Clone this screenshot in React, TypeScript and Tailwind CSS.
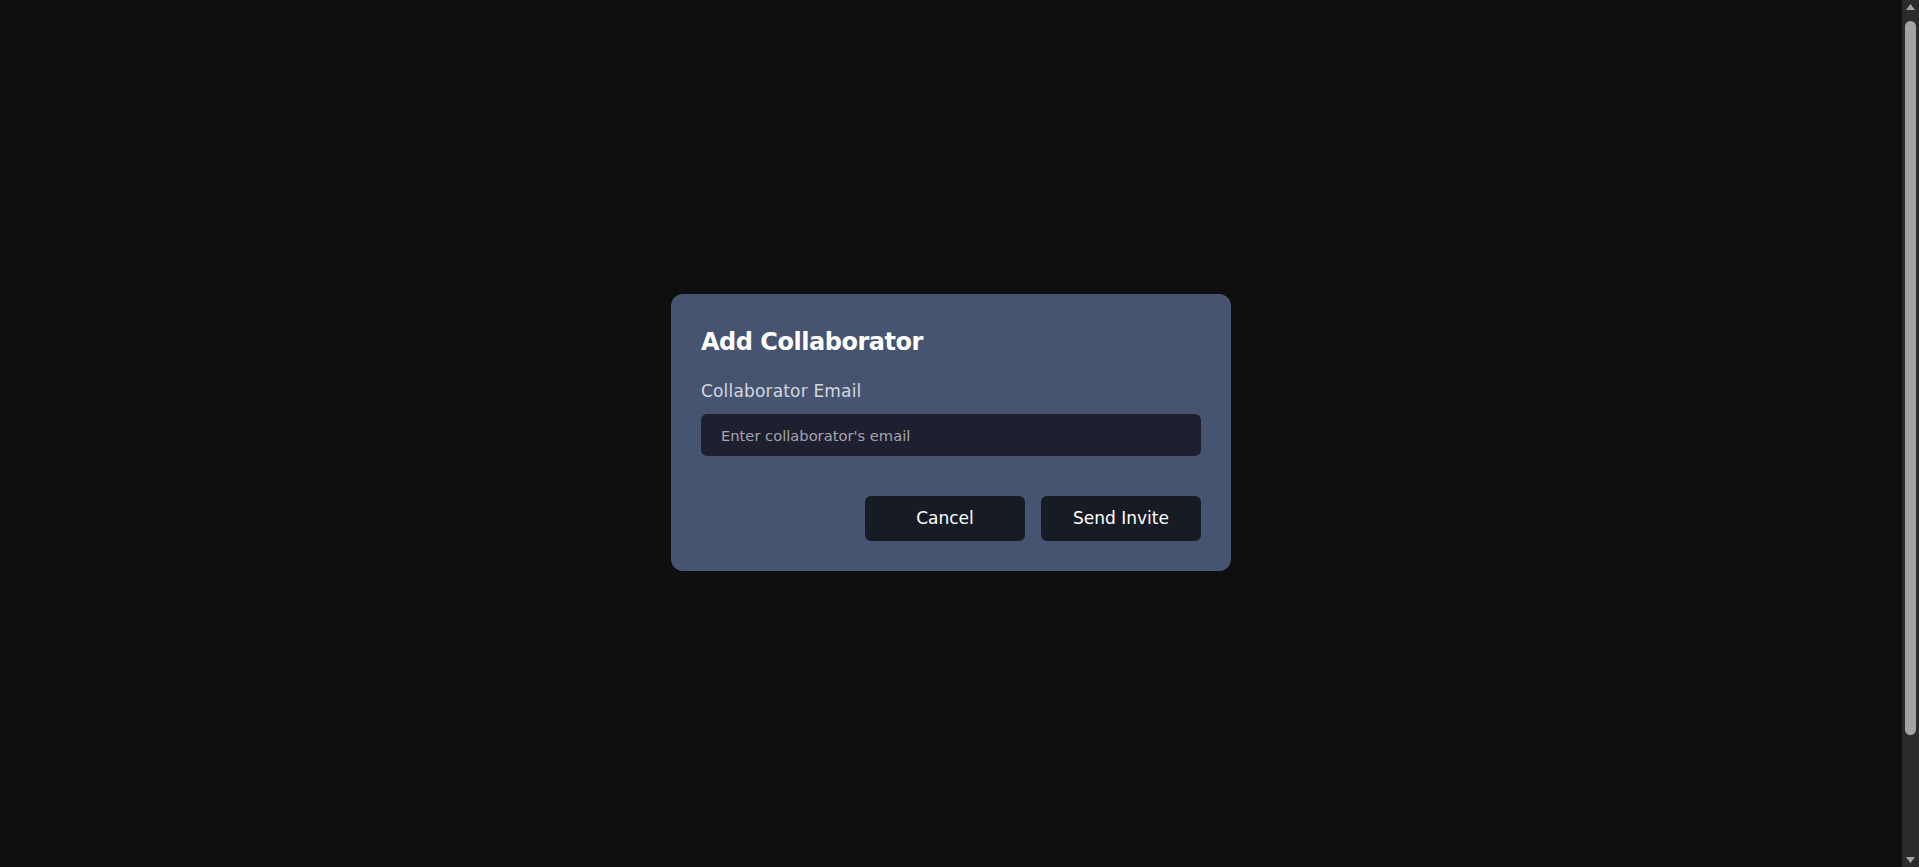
export default function App() {
  return (
    <div
      className="flex h-[867px] w-full overflow-hidden bg-[#0f0f11]"
      style={{ fontFamily: '"DejaVu Sans", "Noto Sans", sans-serif' }}
    >
      <main className="flex flex-1 items-center justify-center pb-[2px]">
        <div className="w-[560px] rounded-xl bg-[#475470] px-[30px] pt-[32px] pb-[30px]">
          <h2 className="text-2xl leading-8 font-bold tracking-[-0.02em] text-white">Add Collaborator</h2>
          <label className="mt-[21px] block text-[17px] leading-6 tracking-[0.01em] text-[#d4d7de]">
            Collaborator Email
          </label>
          <input
            type="email"
            placeholder="Enter collaborator's email"
            className="mt-[11px] block h-[42px] w-full rounded-md bg-[#1e202f] px-5 text-[14.7px] text-white outline-none placeholder:text-[#a3a6ae]"
          />
          <div className="mt-10 flex justify-end gap-4">
            <button className="h-[45px] w-[160px] rounded-md bg-[#171b23] text-[17px] text-white">
              Cancel
            </button>
            <button className="h-[45px] w-[160px] rounded-md bg-[#171b23] text-[17px] text-white">
              Send Invite
            </button>
          </div>
        </div>
      </main>
      <aside className="flex w-[17px] flex-col items-center bg-[#2b2b2b]">
        <div className="flex h-[17px] w-full items-center justify-center">
          <svg width="9" height="6" viewBox="0 0 9 6" className="mt-[-3px]">
            <polygon points="4.5,0 9,6 0,6" fill="#a3a3a3" />
          </svg>
        </div>
        <div className="mt-[4px] h-[714px] w-[11px] rounded-full bg-[#a3a3a3]" />
        <div className="flex-1" />
        <div className="flex h-[17px] w-full items-center justify-center">
          <svg width="9" height="6" viewBox="0 0 9 6" className="mt-[3px]">
            <polygon points="0,0 9,0 4.5,6" fill="#a3a3a3" />
          </svg>
        </div>
      </aside>
    </div>
  );
}
